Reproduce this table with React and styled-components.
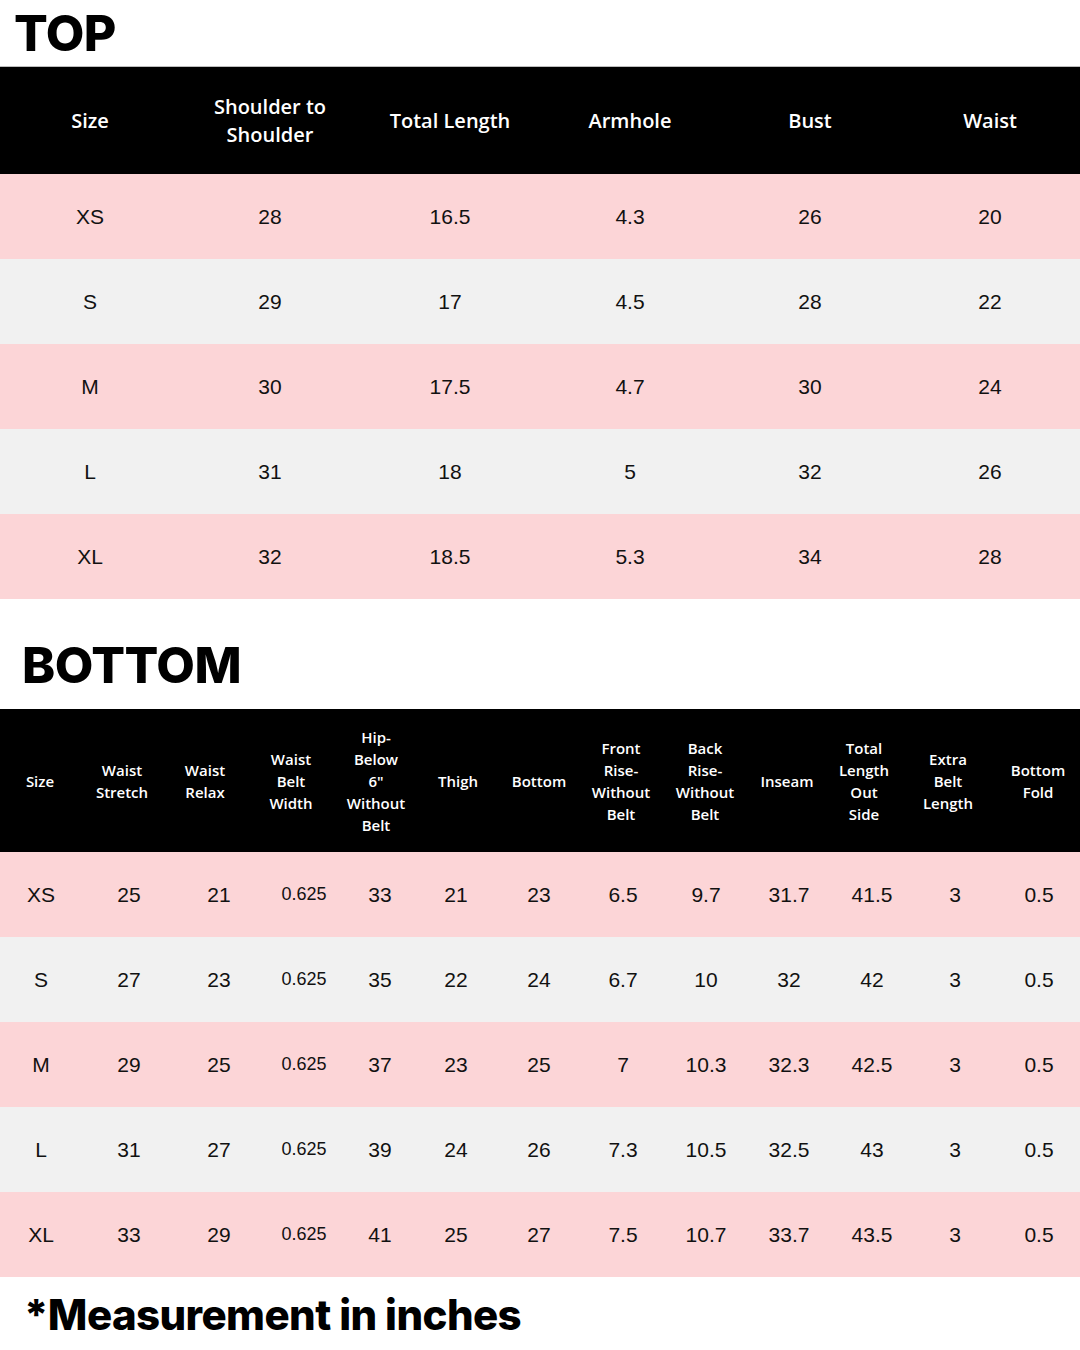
import React from 'react';
import styled, { createGlobalStyle } from 'styled-components';

const GlobalStyle = createGlobalStyle`
  body {
    margin: 0;
    background: #ffffff;
  }
`

const Page = styled.div`
  width: 1080px;
  height: 1350px;
  background: #fff;
  overflow: hidden;
`

const Title = styled.h1`
  margin: 0;
  font-family: Inter, "Noto Sans", sans-serif;
  font-weight: 800;
  color: #000;
  font-size: ${p => p.size}px;
  line-height: ${p => p.lh}px;
  padding: ${p => p.top || 0}px 0 0 ${p => p.left}px;
  letter-spacing: ${p => p.ls || -0.5}px;
`

// header and body are laid out on their own column tracks, like the original graphic
const Grid = styled.div`
  display: grid;
  grid-template-columns: ${p => p.cols};
`

const HeadCell = styled.div`
  background: #000;
  color: #fff;
  height: ${p => p.h}px;
  display: flex;
  align-items: center;
  justify-content: center;
  text-align: center;
  font-family: "Open Sans", sans-serif;
  font-weight: 600;
  font-size: ${p => p.fs}px;
  line-height: ${p => p.lh}px;
`

const Cell = styled.div`
  height: 85px;
  display: flex;
  align-items: center;
  justify-content: center;
  background: ${p => (p.pink ? '#fcd5d7' : '#f1f1f1')};
  color: #111;
  font-family: "Liberation Sans", Arial, sans-serif;
  font-size: ${p => (p.small ? 18 : 21)}px;
`

const Divider = styled.div`
  height: 1px;
  background: #bdbdbd;
`

const topHead = ['Size', 'Shoulder to\nShoulder', 'Total Length', 'Armhole', 'Bust', 'Waist'];
const topRows = [
  ['XS', '28', '16.5', '4.3', '26', '20'],
  ['S', '29', '17', '4.5', '28', '22'],
  ['M', '30', '17.5', '4.7', '30', '24'],
  ['L', '31', '18', '5', '32', '26'],
  ['XL', '32', '18.5', '5.3', '34', '28'],
];

const bottomHead = [
  'Size', 'Waist\nStretch', 'Waist\nRelax', 'Waist\nBelt\nWidth', 'Hip-\nBelow\n6"\nWithout\nBelt',
  'Thigh', 'Bottom', 'Front\nRise-\nWithout\nBelt', 'Back\nRise-\nWithout\nBelt', 'Inseam',
  'Total\nLength\nOut\nSide', 'Extra\nBelt\nLength', 'Bottom\nFold',
];
const bottomRows = [
  ['XS', '25', '21', '0.625', '33', '21', '23', '6.5', '9.7', '31.7', '41.5', '3', '0.5'],
  ['S', '27', '23', '0.625', '35', '22', '24', '6.7', '10', '32', '42', '3', '0.5'],
  ['M', '29', '25', '0.625', '37', '23', '25', '7', '10.3', '32.3', '42.5', '3', '0.5'],
  ['L', '31', '27', '0.625', '39', '24', '26', '7.3', '10.5', '32.5', '43', '3', '0.5'],
  ['XL', '33', '29', '0.625', '41', '25', '27', '7.5', '10.7', '33.7', '43.5', '3', '0.5'],
];

const bottomHeadCols = '80px 84px 82px 90px 80px 84px 78px 86px 82px 82px 72px 96px 1fr';
const bottomBodyCols = '82px 94px 86px 84px 68px 84px 82px 86px 80px 86px 80px 86px 1fr';

const lines = (t) => t.split('\n').map((l, i) => <React.Fragment key={i}>{i > 0 && <br />}{l}</React.Fragment>);

const SizeTable = ({ head, rows, headCols, bodyCols, headH, headFs, headLh }) => (
  <div>
    <Grid cols={headCols}>
      {head.map((h, i) => (
        <HeadCell key={i} h={headH} fs={headFs} lh={headLh}>
          <span>{lines(h)}</span>
        </HeadCell>
      ))}
    </Grid>
    <Grid cols={bodyCols}>
      {rows.map((r, ri) =>
        r.map((v, ci) => (
          <Cell key={ri + '-' + ci} pink={ri % 2 === 0} small={v === '0.625'}>{v}</Cell>
        ))
      )}
    </Grid>
  </div>
)

const App = () => (
  <Page>
    <GlobalStyle />
    <Title size={50} lh={66} left={14}>TOP</Title>
    <Divider />
    <SizeTable
      head={topHead}
      rows={topRows}
      headCols="repeat(6, 1fr)"
      bodyCols="repeat(6, 1fr)"
      headH={107}
      headFs={20}
      headLh={28}
    />
    <Title size={50} lh={88} top={22} left={22}>BOTTOM</Title>
    <SizeTable
      head={bottomHead}
      rows={bottomRows}
      headCols={bottomHeadCols}
      bodyCols={bottomBodyCols}
      headH={143}
      headFs={15}
      headLh={22}
    />
    <Title size={42} lh={75} left={24} ls={-0.6}>*Measurement in inches</Title>
  </Page>
)

export default App;
